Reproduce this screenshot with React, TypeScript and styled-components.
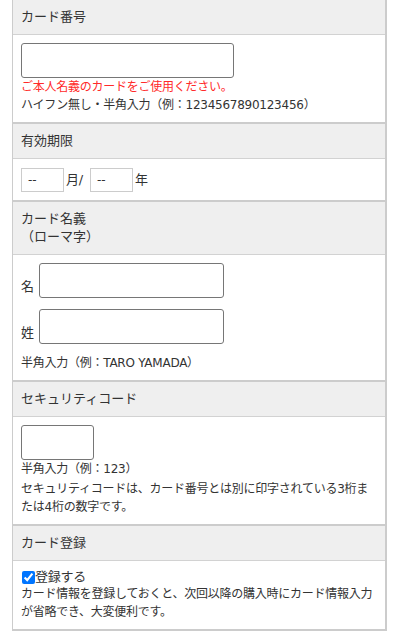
import React from "react";
import styled, { createGlobalStyle } from "styled-components";

const Global = createGlobalStyle`
  html, body { margin: 0; padding: 0; background: #fff; }
  body {
    font-family: "DejaVu Sans", "Noto Sans CJK JP", sans-serif;
    color: #333;
  }
`;

const Form = styled.div`
  margin-left: 12px;
  width: 372px;
  border-left: 1px solid #cccccc;
  border-right: 2px solid #cccccc;
`;

const Section = styled.section`
  border-bottom: 2px solid #cccccc;
`;

const Head = styled.div`
  background: #efefef;
  border-bottom: 1px solid #d2d2d2;
  padding: 8px 8px;
  font-size: 13px;
  line-height: 18px;
`;

const Body = styled.div`
  background: #fff;
  padding: 8px 8px;
  font-size: 12px;
  line-height: 18px;
  letter-spacing: -0.25px;
`;

const TextInput = styled.input<{ $w: number }>`
  display: block;
  box-sizing: border-box;
  width: ${(p) => p.$w}px;
  height: 35px;
  margin: 0;
  border: 1px solid #767676;
  border-radius: 3px;
  background: #fff;
  padding: 0 6px;
  font: inherit;
`;

const SmallInput = styled.input`
  box-sizing: border-box;
  width: 43px;
  height: 24px;
  margin: 0;
  border: 1px solid #cccccc;
  border-radius: 0;
  padding: 0 6px;
  font-family: "DejaVu Sans", "Noto Sans CJK JP", sans-serif;
  font-size: 12px;
  color: #333;
  &::placeholder { color: #333; }
`;

const Note = styled.div<{ $red?: boolean; $mt?: number }>`
  color: ${(p) => (p.$red ? "#ff2a2a" : "#333")};
  margin-top: ${(p) => p.$mt ?? 0}px;
`;

const ExpiryRow = styled.div`
  display: flex;
  align-items: center;
  gap: 2px;
  font-size: 13px;
  padding-top: 1px;
`;

const Unit = styled.span<{ $after?: number }>`
  margin-right: ${(p) => p.$after ?? 0}px;
`;

const NameRow = styled.div<{ $mb?: number }>`
  display: flex;
  align-items: flex-end;
  gap: 6px;
  margin-bottom: ${(p) => p.$mb ?? 0}px;
`;

const NameLabel = styled.span`
  font-size: 13px;
  line-height: 18px;
  width: 12px;
  margin-bottom: 2px;
`;

const CheckLabel = styled.label`
  display: flex;
  align-items: center;
  font-size: 13px;
  line-height: 16px;
  color: #333;
`;

const Check = styled.input`
  width: 13px;
  height: 13px;
  margin: 0 0 0 1px;
  accent-color: #0075ff;
`;

export default function App() {
  return (
    <>
      <Global />
      <Form>
        <Section>
          <Head>カード番号</Head>
          <Body>
            <TextInput $w={213} type="text" />
            <Note $red>ご本人名義のカードをご使用ください。</Note>
            <Note>ハイフン無し・半角入力（例：1234567890123456）</Note>
          </Body>
        </Section>
        <Section>
          <Head>有効期限</Head>
          <Body>
            <ExpiryRow>
              <SmallInput placeholder="--" />
              <Unit $after={5}>月/</Unit>
              <SmallInput placeholder="--" />
              <Unit>年</Unit>
            </ExpiryRow>
          </Body>
        </Section>
        <Section>
          <Head>
            カード名義
            <br />
            （ローマ字）
          </Head>
          <Body>
            <NameRow $mb={11}>
              <NameLabel>名</NameLabel>
              <TextInput $w={185} type="text" />
            </NameRow>
            <NameRow $mb={10}>
              <NameLabel>姓</NameLabel>
              <TextInput $w={185} type="text" />
            </NameRow>
            <Note>半角入力（例：TARO YAMADA）</Note>
          </Body>
        </Section>
        <Section>
          <Head>セキュリティコード</Head>
          <Body>
            <TextInput $w={73} type="text" />
            <Note>半角入力（例：123）</Note>
            <Note $mt={2}>
              セキュリティコードは、カード番号とは別に印字されている3桁または4桁の数字です。
            </Note>
          </Body>
        </Section>
        <Section>
          <Head>カード登録</Head>
          <Body>
            <CheckLabel>
              <Check type="checkbox" defaultChecked />
              登録する
            </CheckLabel>
            <Note>
              カード情報を登録しておくと、次回以降の購入時にカード情報入力が省略でき、大変便利です。
            </Note>
          </Body>
        </Section>
      </Form>
    </>
  );
}
